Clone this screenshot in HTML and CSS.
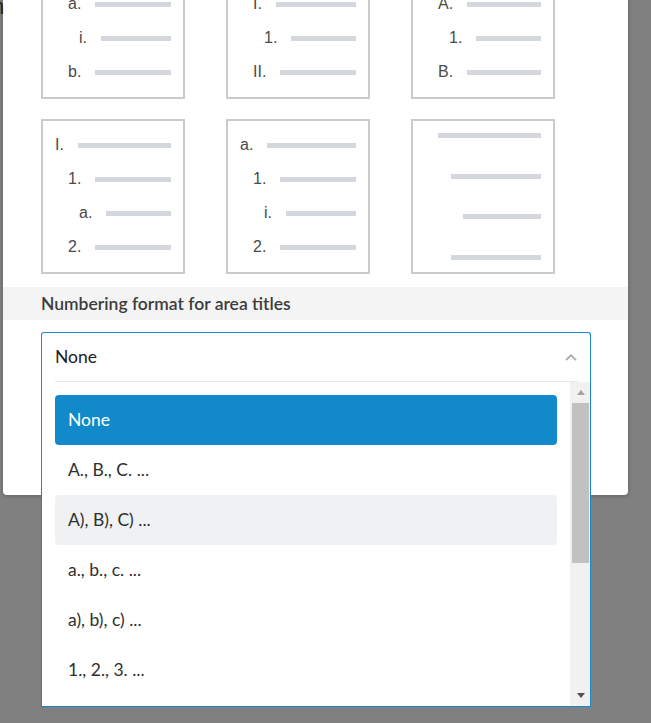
FILE: index.html
```html
<!DOCTYPE html>
<html>
<head>
<meta charset="utf-8">
<link rel="stylesheet" href="styles.css">
</head>
<body>
<span class="behind">n</span>
<div class="modal">
  <div class="grid">
    <div class="card">
      <div class="item l0"><span class="lbl">1.</span><span class="bar"></span></div>
      <div class="item l1"><span class="lbl">a.</span><span class="bar"></span></div>
      <div class="item l2"><span class="lbl">i.</span><span class="bar"></span></div>
      <div class="item l1"><span class="lbl">b.</span><span class="bar"></span></div>
    </div>
    <div class="card">
      <div class="item l0"><span class="lbl">1.</span><span class="bar"></span></div>
      <div class="item l1"><span class="lbl">I.</span><span class="bar"></span></div>
      <div class="item l2"><span class="lbl">1.</span><span class="bar"></span></div>
      <div class="item l1"><span class="lbl">II.</span><span class="bar"></span></div>
    </div>
    <div class="card">
      <div class="item l0"><span class="lbl">1.</span><span class="bar"></span></div>
      <div class="item l1"><span class="lbl">A.</span><span class="bar"></span></div>
      <div class="item l2"><span class="lbl">1.</span><span class="bar"></span></div>
      <div class="item l1"><span class="lbl">B.</span><span class="bar"></span></div>
    </div>
    <div class="card">
      <div class="item l0"><span class="lbl">I.</span><span class="bar"></span></div>
      <div class="item l1"><span class="lbl">1.</span><span class="bar"></span></div>
      <div class="item l2"><span class="lbl">a.</span><span class="bar"></span></div>
      <div class="item l1"><span class="lbl">2.</span><span class="bar"></span></div>
    </div>
    <div class="card">
      <div class="item l0"><span class="lbl">a.</span><span class="bar"></span></div>
      <div class="item l1"><span class="lbl">1.</span><span class="bar"></span></div>
      <div class="item l2"><span class="lbl">i.</span><span class="bar"></span></div>
      <div class="item l1"><span class="lbl">2.</span><span class="bar"></span></div>
    </div>
    <div class="card plain">
      <span class="pbar p1"></span>
      <span class="pbar p2"></span>
      <span class="pbar p3"></span>
      <span class="pbar p2"></span>
    </div>
  </div>

  <div class="section-title">Numbering format for area titles</div>

  <div class="select">
    <div class="select-head">
      <div class="select-row">
        <span class="value">None</span>
        <svg class="chev" width="12" height="7" viewBox="0 0 12 7"><path d="M1 6.2 L6 1.2 L11 6.2" fill="none" stroke="#a9a9a9" stroke-width="1.8"/></svg>
      </div>
    </div>
    <div class="menu">
      <ul class="options">
        <li class="opt selected">None</li>
        <li class="opt">A., B., C. ...</li>
        <li class="opt hover">A), B), C) ...</li>
        <li class="opt">a., b., c. ...</li>
        <li class="opt">a), b), c) ...</li>
        <li class="opt">1., 2., 3. ...</li>
        <li class="opt">1), 2), 3) ...</li>
      </ul>
      <div class="scrollbar">
        <div class="sb-btn"><span class="tri-up"></span></div>
        <div class="sb-track"><div class="sb-thumb"></div></div>
        <div class="sb-btn"><span class="tri-down"></span></div>
      </div>
    </div>
  </div>
</div>
</body>
</html>
```

FILE: styles.css
```css
* { box-sizing: border-box; }
html, body { margin: 0; height: 100%; }
body {
  background: #808080;
  overflow: hidden;
  position: relative;
  font-family: Lato, "Noto Sans", sans-serif;
}
.behind {
  position: absolute;
  left: -8px;
  top: -6px;
  font: 22px "Liberation Sans", Arial, sans-serif;
  color: #262626;
}
.modal {
  margin: -71px 0 0 3px;
  width: 625px;
  background: #fff;
  border-radius: 0 0 4px 4px;
  padding: 15px 0 113px;
  box-shadow: 0 1px 4px rgba(0, 0, 0, 0.25);
}
.grid {
  display: grid;
  grid-template-columns: repeat(3, 144px);
  column-gap: 41px;
  row-gap: 20px;
  padding: 0 38px;
}
.card {
  height: 155px;
  border: 2px solid #cbcbcb;
  padding: 7px 12px 8px;
  display: flex;
  flex-direction: column;
}
.item {
  height: 34px;
  display: flex;
  align-items: center;
  gap: 14px;
  font: 16px "Liberation Sans", Arial, sans-serif;
  color: #4a4a4a;
}
.l0 { padding-left: 0; }
.l1 { padding-left: 13px; }
.l2 { padding-left: 24px; }
.bar {
  flex: 1;
  height: 5px;
  background: #d4d8de;
}
.card.plain {
  padding: 12px;
  justify-content: space-between;
}
.pbar {
  display: block;
  height: 5px;
  background: #d4d8de;
}
.p1 { margin-left: 13px; }
.p2 { margin-left: 26px; }
.p3 { margin-left: 38px; }

.section-title {
  margin-top: 13px;
  height: 33px;
  line-height: 33px;
  background: #f4f4f4;
  padding-left: 38px;
  font-size: 17.5px;
  font-weight: 600;
  color: #3c3c3c;
}

.select {
  position: relative;
  margin: 12px 0 0 38px;
  width: 550px;
}
.select-head {
  border: 1px solid #1589cb;
  border-bottom: none;
  border-radius: 3px 3px 0 0;
  padding: 0 12px 0 13px;
  background: #fff;
}
.select-row {
  height: 49px;
  border-bottom: 1px solid #e8e8e8;
  display: flex;
  align-items: center;
  justify-content: space-between;
  font-size: 17.5px;
  color: #1c1c1c;
}
.value { margin-top: -1px; }
.chev { display: block; margin-right: 1px; }

.menu {
  position: absolute;
  top: 100%;
  left: 0;
  width: 550px;
  height: 325px;
  background: #fff;
  border: 1px solid #1589cb;
  border-top: none;
  display: flex;
}
.options {
  list-style: none;
  margin: 0;
  flex: 1;
  padding: 13px 13px 0 13px;
  overflow: hidden;
}
.opt {
  height: 50px;
  border-radius: 4px;
  padding: 0 0 2px 13px;
  display: flex;
  align-items: center;
  font-size: 17.5px;
  color: #2e2e2e;
}
.opt.selected { background: #1289c8; color: #fff; }
.opt.hover { background: #f0f1f3; }

.scrollbar {
  width: 20px;
  background: #f1f1f1;
  display: flex;
  flex-direction: column;
}
.sb-btn {
  height: 21px;
  display: flex;
  align-items: center;
  justify-content: center;
  padding-left: 1px;
}
.tri-up {
  width: 0; height: 0;
  border-left: 4.5px solid transparent;
  border-right: 4.5px solid transparent;
  border-bottom: 5px solid #a3a3a3;
}
.tri-down {
  width: 0; height: 0;
  border-left: 4.5px solid transparent;
  border-right: 4.5px solid transparent;
  border-top: 5px solid #505050;
}
.sb-track { flex: 1; padding: 0 1px 0 2px; }
.sb-thumb { height: 160px; background: #c1c1c1; }
```
